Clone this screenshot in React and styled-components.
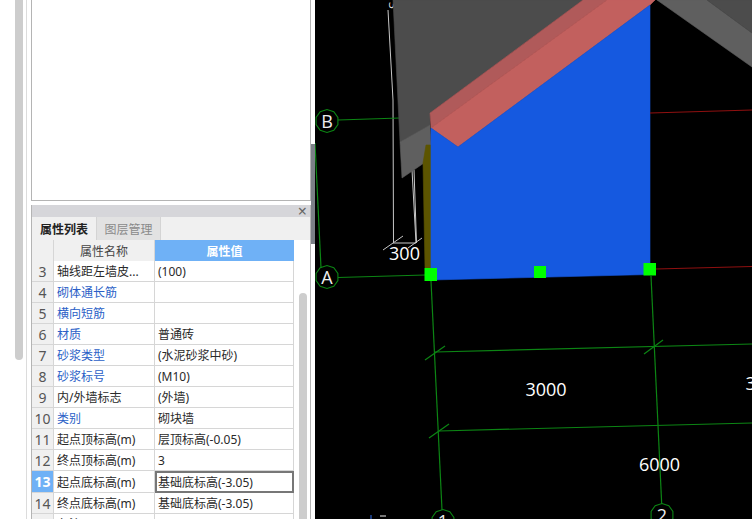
import styled, { createGlobalStyle } from "styled-components";

const GlobalStyle = createGlobalStyle`
html, body {
    margin: 0;
    padding: 0;
    background: #fff;
    overflow: hidden;
}
`

const Page = styled.div`
    display: flex;
    width: 752px;
    height: 519px;
    overflow: hidden;
    font-family: "Noto Sans", "Noto Sans CJK SC", sans-serif;
`

const Sidebar = styled.div`
    display: flex;
    flex: 0 0 315px;
    height: 519px;
    background: #fff;
`

const PageScroll = styled.div`
    flex: 0 0 8px;
    height: 360px;
    margin-left: 15px;
    background: #cdcdcd;
    border-radius: 0 0 4px 4px;
`

const Rule = styled.div`
    flex: 0 0 1px;
    margin-left: 3px;
    margin-right: 4px;
    background: #dcdcdc;
`

const Panel = styled.div`
    flex: 0 0 280px;
    display: flex;
    flex-direction: column;
`

const EmptyBox = styled.div`
    box-sizing: border-box;
    height: 201px;
    border: 1px solid #b4b4b4;
    border-top: none;
    margin-bottom: 4px;
`

const Properties = styled.div`
    flex: 1;
    min-height: 0;
    display: flex;
    flex-direction: column;
    border-left: 1px solid #b4b4b4;
    border-right: 1px solid #b4b4b4;
`

const TitleBar = styled.div`
    flex: 0 0 12px;
    display: flex;
    align-items: center;
    justify-content: flex-end;
    padding-right: 3px;
    background: #d6d6da;
    color: #666;
    font-size: 16px;
    line-height: 12px;
`

const Tabs = styled.div`
    flex: 0 0 23px;
    display: flex;
    background: #f0f0f0;
`

const Tab = styled.div`
    flex: 0 0 ${props => props.active ? 64 : 65}px;
    box-sizing: border-box;
    display: flex;
    align-items: center;
    justify-content: center;
    font-size: 12px;
    font-weight: ${props => props.active ? 700 : 400};
    color: ${props => props.active ? "#222" : "#8a8a8a"};
    background: ${props => props.active ? "#f0f0f0" : "#e2e2e2"};
    border-left: ${props => props.active ? "none" : "1px solid #d4d4d4"};
    border-right: ${props => props.active ? "none" : "1px solid #d4d4d4"};
`

const TableArea = styled.div`
    flex: 1;
    min-height: 0;
    display: flex;
`

const Table = styled.div`
    flex: 0 0 263px;
    display: flex;
    flex-direction: column;
`

const Row = styled.div`
    display: grid;
    grid-template-columns: 22px 101px 139px;
    flex: 0 0 21px;
    box-sizing: border-box;
`

const NumCell = styled.div`
    box-sizing: border-box;
    display: flex;
    align-items: center;
    justify-content: center;
    font-size: 14px;
    color: ${props => props.selected ? "#fff" : "#555"};
    font-weight: ${props => props.selected ? 700 : 400};
    background: ${props => props.selected ? "#6fb1f6" : "#f0f0f0"};
    border-right: 1px solid #d6d6d6;
    border-bottom: 1px solid #d6d6d6;
`

const NameCell = styled.div`
    box-sizing: border-box;
    display: flex;
    align-items: center;
    padding-left: 3px;
    font-size: 12px;
    white-space: nowrap;
    overflow: hidden;
    color: ${props => props.link ? "#2b5fc7" : "#2a2a2a"};
    border-right: 1px solid #d6d6d6;
    border-bottom: 1px solid #d6d6d6;
`

const ValueCell = styled.div`
    box-sizing: border-box;
    display: flex;
    align-items: center;
    padding-left: 3px;
    font-size: 12px;
    white-space: nowrap;
    color: #2a2a2a;
    border-right: 1px solid #d6d6d6;
    border-bottom: 1px solid #d6d6d6;
    ${props => props.selected ? "border: 2px solid #777; padding-left: 1px;" : ""}
`

const HeadCell = styled.div`
    display: flex;
    align-items: center;
    justify-content: center;
    font-size: 12px;
    color: ${props => props.active ? "#fff" : "#444"};
    font-weight: ${props => props.active ? 700 : 400};
    background: ${props => props.active ? "#6fb1f6" : "#f0f0f0"};
    border-right: ${props => props.active ? "none" : "1px solid #d6d6d6"};
`

const ScrollColumn = styled.div`
    flex: 1;
    padding: 53px 3px 0 4px;
`

const ScrollThumb = styled.div`
    width: 8px;
    height: 300px;
    background: #cdcdcd;
    border-radius: 4px 4px 0 0;
`

const Splitter = styled.div`
    flex: 0 0 4px;
    height: 100px;
    margin-top: 144px;
    background: #7b8087;
`

const Canvas = styled.div`
    flex: 1;
    height: 519px;
    background: #000;
`

const DrawingSvg = styled.svg`
    display: block;
    width: 437px;
    height: 519px;
`

const rows = [
    { n: 3, name: "轴线距左墙皮...", value: "(100)" },
    { n: 4, name: "砌体通长筋", value: "", link: true },
    { n: 5, name: "横向短筋", value: "", link: true },
    { n: 6, name: "材质", value: "普通砖", link: true },
    { n: 7, name: "砂浆类型", value: "(水泥砂浆中砂)", link: true },
    { n: 8, name: "砂浆标号", value: "(M10)", link: true },
    { n: 9, name: "内/外墙标志", value: "(外墙)" },
    { n: 10, name: "类别", value: "砌块墙", link: true },
    { n: 11, name: "起点顶标高(m)", value: "层顶标高(-0.05)" },
    { n: 12, name: "终点顶标高(m)", value: "3" },
    { n: 13, name: "起点底标高(m)", value: "基础底标高(-3.05)", selected: true },
    { n: 14, name: "终点底标高(m)", value: "基础底标高(-3.05)" },
    { n: 15, name: "备注", value: "" },
]

const GREEN = "#0c8514"
const LABEL_FONT = "Open Sans, sans-serif"

function Bubble({ x, y, label }) {
    const r = 11.5
    const points = []
    for (let i = 0; i < 10; i++) {
        const a = (Math.PI * 2 * i) / 10 + Math.PI / 10
        points.push(`${(x + r * Math.cos(a)).toFixed(1)},${(y + r * Math.sin(a)).toFixed(1)}`)
    }
    return (
        <g>
            <polygon points={points.join(" ")} fill="none" stroke={GREEN} strokeWidth="1.1" />
            <text x={x} y={y + 6.5} fill="#eee" fontSize="18" textAnchor="middle" fontFamily={LABEL_FONT}>{label}</text>
        </g>
    )
}

function Line({ p, color = GREEN, width = 1.2 }) {
    return <line x1={p[0]} y1={p[1]} x2={p[2]} y2={p[3]} stroke={color} strokeWidth={width} />
}

// stroke in the fill colour closes the hairline seams between faces
function Face({ points, color }) {
    return <polygon points={points} fill={color} stroke={color} strokeWidth="0.6" />
}

const greenLines = [
    [338, 120, 400, 118],
    [338, 277.5, 425, 275],
    [315, 143, 321, 268],
    [431, 281, 442, 510],
    [651, 276, 661.7, 504],
    [435, 352, 752, 344],
    [439, 431, 752, 423],
    [425, 360, 445, 346],
    [644, 354, 663, 340],
    [429, 438, 449, 424],
]

const whiteLines = [
    [388, 10, 393, 100],
    [393, 100, 393.5, 243],
    [412, 170, 416, 243],
    [414, 170, 416.5, 243],
    [393, 243, 416, 243],
    [383, 250, 403, 236],
    [408, 248, 422, 238],
]

function Drawing() {
    return (
        <DrawingSvg viewBox="315 0 437 519">
            {whiteLines.map((p, i) => <Line key={i} p={p} color="#c8c8c8" width={1} />)}
            <text x="389" y="2" fill="#ddd" fontSize="12" transform="rotate(90 389 2)" fontFamily={LABEL_FONT}>3</text>

            {greenLines.map((p, i) => <Line key={i} p={p} />)}

            <Face points="393,0 583,0 430,113 430,125 400,142" color="#4c4c4c" />
            <Face points="400,142 430,125 431,145 424,163 402,178" color="#5f5f5f" />
            <Face points="426,145 431,145 431,268 425,268 423,163" color="#5c5400" />
            <Face points="430,113 583,0 607,0 431,128" color="#b05a5a" />
            <Face points="431,128 607,0 655,0 650,5 458,147" color="#c2605e" />
            <Face points="431,128 458,147 650,5 650,274.5 431,280" color="#1559e0" />

            <Face points="657,0 707,0 752,33 752,67" color="#5f5f5f" />
            <Face points="707,0 752,0 752,33" color="#4c4c4c" />

            <Line p={[650, 113, 752, 110]} color="#8f1010" />
            <Line p={[656, 269, 752, 266.5]} color="#8f1010" />

            <rect x="424.5" y="268" width="12.5" height="13" fill="#00ff00" />
            <rect x="534" y="266" width="12" height="12" fill="#00ff00" />
            <rect x="643.5" y="263" width="12.5" height="12.5" fill="#00ff00" />

            <Bubble x={327} y={121} label="B" />
            <Bubble x={327} y={277} label="A" />
            <Bubble x={443} y={521} label="1" />
            <Bubble x={662} y={515} label="2" />

            <Line p={[371, 515, 371, 519]} color="#2a5fc7" />
            <Line p={[380, 516, 386, 516]} color="#c8c8c8" />

            <text x="404.5" y="260" fill="#fff" fontSize="18" textAnchor="middle" fontFamily={LABEL_FONT}>300</text>
            <text x="546" y="395.5" fill="#fff" fontSize="18" textAnchor="middle" fontFamily={LABEL_FONT}>3000</text>
            <text x="659.5" y="470.5" fill="#fff" fontSize="18" textAnchor="middle" fontFamily={LABEL_FONT}>6000</text>
            <text x="745.5" y="390" fill="#fff" fontSize="18" fontFamily={LABEL_FONT}>3</text>
        </DrawingSvg>
    )
}

export default function App() {
    return (
        <Page>
            <GlobalStyle />
            <Sidebar>
                <PageScroll />
                <Rule />
                <Panel>
                    <EmptyBox />
                    <Properties>
                        <TitleBar>×</TitleBar>
                        <Tabs>
                            <Tab active>属性列表</Tab>
                            <Tab>图层管理</Tab>
                        </Tabs>
                        <TableArea>
                            <Table>
                                <Row>
                                    <HeadCell />
                                    <HeadCell>属性名称</HeadCell>
                                    <HeadCell active>属性值</HeadCell>
                                </Row>
                                {rows.map(row => (
                                    <Row key={row.n}>
                                        <NumCell selected={row.selected}>{row.n}</NumCell>
                                        <NameCell link={row.link}>{row.name}</NameCell>
                                        <ValueCell selected={row.selected}>{row.value}</ValueCell>
                                    </Row>
                                ))}
                            </Table>
                            <ScrollColumn>
                                <ScrollThumb />
                            </ScrollColumn>
                        </TableArea>
                    </Properties>
                </Panel>
                <Splitter />
            </Sidebar>
            <Canvas>
                <Drawing />
            </Canvas>
        </Page>
    )
}
